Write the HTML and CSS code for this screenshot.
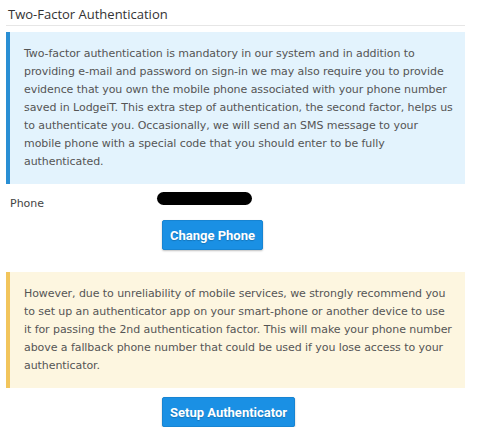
FILE: index.html
```html
<!DOCTYPE html>
<html>
<head>
<meta charset="utf-8">
<link rel="stylesheet" href="styles.css">
</head>
<body>
<div class="page">
  <h2 class="title">Two-Factor Authentication</h2>
  <div class="note note-info">
    <p>Two-factor authentication is mandatory in our system and in addition to providing e-mail and password on sign-in we may also require you to provide evidence that you own the mobile phone associated with your phone number saved in LodgeiT. This extra step of authentication, the second factor, helps us to authenticate you. Occasionally, we will send an SMS message to your mobile phone with a special code that you should enter to be fully authenticated.</p>
  </div>
  <div class="phone-row">
    <span class="label">Phone</span>
    <span class="redacted"></span>
  </div>
  <div class="actions">
    <button class="btn">Change Phone</button>
  </div>
  <div class="note note-warn">
    <p>However, due to unreliability of mobile services, we strongly recommend you to set up an authenticator app on your smart-phone or another device to use it for passing the 2nd authentication factor. This will make your phone number above a fallback phone number that could be used if you lose access to your authenticator.</p>
  </div>
  <div class="actions actions-2">
    <button class="btn">Setup Authenticator</button>
  </div>
</div>
</body>
</html>
```
FILE: styles.css
```css
html, body { margin: 0; padding: 0; background: #fff; }
.page {
  width: 459px;
  margin-left: 6px;
  font-family: "DejaVu Sans", Verdana, sans-serif;
  color: #555;
}
.title {
  margin: 0;
  padding: 5px 0 2px 2px;
  font-family: "Open Sans", sans-serif;
  font-weight: 400;
  font-size: 13px;
  line-height: 18px;
  color: #333;
  border-bottom: 1px solid #e6e6e6;
}
.note {
  margin-top: 6px;
  padding: 13px 11px 13px 14px;
  border-left: 4px solid #2a8fd4;
}
.note p {
  margin: 0;
  font-size: 11px;
  line-height: 18px;
  letter-spacing: -0.07px;
}
.note-info { background: #e3f3fd; }
.note-warn { background: #fdf6e0; border-left-color: #f2c55c; margin-top: 22px; }
.phone-row {
  display: flex;
  align-items: flex-start;
  height: 30px;
  padding-top: 8px;
  box-sizing: border-box;
}
.label {
  font-size: 11px;
  line-height: 14px;
  margin-top: 5px;
  padding-left: 4px;
  width: 147px;
  color: #444;
}
.redacted {
  display: block;
  width: 95px;
  height: 13px;
  background: #000;
  border-radius: 7px;
}
.actions { padding-left: 156px; margin-top: 6px; }
.actions-2 { margin-top: 9px; }
.btn {
  font-family: Roboto, "Liberation Sans", sans-serif;
  font-weight: 700;
  font-size: 13px;
  color: #fff;
  background: #1a90e4;
  border: 1px solid #1784d2;
  border-radius: 2px;
  height: 30px;
  padding: 0 7px;
  box-shadow: 0 1px 2px rgba(0,0,0,0.25);
  text-shadow: 0 1px 1px rgba(0,0,0,0.2);
}
```
